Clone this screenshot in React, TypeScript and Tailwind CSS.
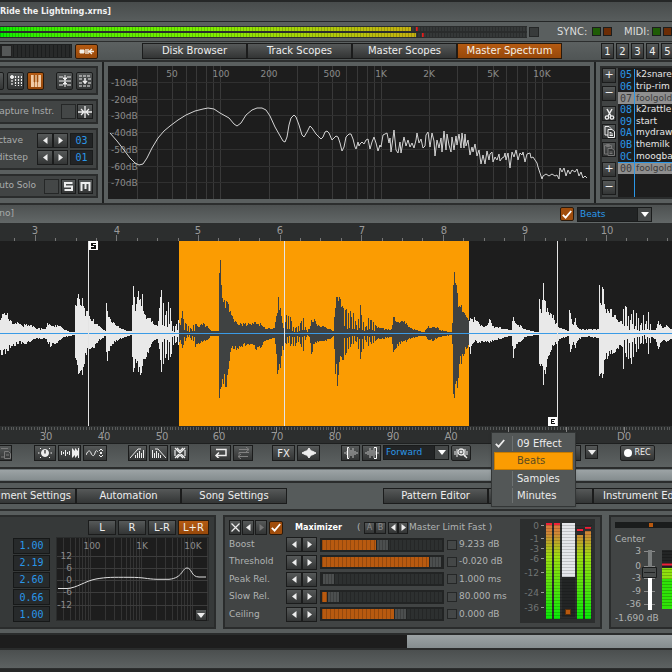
import type { ReactNode } from "react";

const BTN = "flex shrink-0 items-center justify-center border border-[#1b1c1c] bg-gradient-to-b from-[#565959] to-[#333535] text-[#eeeeee]";
const HOT = "flex shrink-0 items-center justify-center border border-[#2a1a0c] bg-gradient-to-b from-[#b45a12] to-[#97480a] text-[#f4f0e8]";
const BOX = "border-2 border-[#2a2c2c] bg-[#414444]";

// envelope of the sample: x, peak above and peak below the centre line
const WAVE: [number, number, number][] = [
  [0, 18, 22], [2, 19, 21], [7, 20, 17], [10, 13, 14], [14, 9, 12], [17, 11, 10], [21, 8, 10], [26, 9, 10], [31, 8, 7], [38, 5, 5], [45, 4, 5],
  [47, 10, 8], [50, 8, 13], [55, 8, 10], [60, 7, 6], [65, 3, 3], [73, 1, 1], [74, 1, 1], [75, 28, 24], [78, 39, 40], [80, 28, 37], [82, 35, 41],
  [84, 25, 30], [86, 22, 21], [89, 17, 15], [93, 14, 14], [97, 9, 9], [101, 5, 5], [105, 2, 2], [106, 30, 18], [107, 22, 27], [109, 16, 17],
  [113, 11, 10], [118, 7, 6], [125, 3, 3], [131, 2, 1], [132, 28, 23], [133, 47, 38], [135, 22, 25], [138, 42, 38], [140, 34, 41], [142, 39, 32],
  [144, 19, 25], [148, 15, 19], [152, 12, 8], [157, 7, 5], [159, 25, 15], [161, 43, 38], [163, 30, 30], [166, 22, 20], [169, 36, 30],
  [171, 12, 20], [174, 5, 8], [178, 13, 11], [180, 8, 6], [182, 22, 14], [184, 13, 10], [187, 8, 3], [190, 5, 4], [195, 9, 13], [200, 8, 9],
  [203, 10, 7], [207, 7, 6], [211, 2, 2], [218, 2, 2], [219, 60, 64], [220, 73, 55], [221, 48, 53], [222, 35, 45], [226, 32, 53], [228, 29, 35],
  [230, 22, 18], [233, 14, 15], [236, 11, 16], [240, 10, 13], [245, 10, 12], [250, 9, 10], [255, 11, 15], [260, 10, 14], [263, 6, 8], [268, 5, 6],
  [274, 5, 4], [276, 17, 20], [277, 20, 40], [278, 36, 36], [280, 25, 34], [282, 10, 12], [283, 5, 16], [286, 18, 10], [290, 16, 12],
  [292, 8, 11], [295, 5, 12], [300, 10, 10], [303, 15, 17], [306, 3, 3], [309, 4, 3], [311, 13, 20], [314, 14, 10], [318, 8, 8], [324, 6, 7],
  [330, 4, 5], [333, 2, 2], [334, 16, 15], [335, 25, 40], [336, 36, 30], [337, 36, 52], [339, 36, 28], [342, 27, 26], [346, 24, 19], [350, 22, 13],
  [353, 20, 10], [356, 8, 8], [360, 28, 25], [362, 13, 18], [365, 6, 6], [368, 15, 12], [371, 13, 10], [375, 8, 7], [380, 5, 5], [386, 4, 4],
  [391, 4, 3], [393, 16, 18], [398, 11, 12], [402, 12, 8], [406, 10, 8], [410, 5, 5], [416, 3, 3], [424, 1, 2], [428, 7, 6], [432, 6, 7],
  [437, 6, 4], [440, 3, 3], [445, 2, 2], [451, 1, 1], [452, 10, 10], [453, 48, 60], [454, 61, 64], [455, 50, 50], [457, 40, 54], [459, 27, 30],
  [461, 28, 30], [464, 20, 20], [467, 15, 14], [469, 12, 13], [470, 15, 20], [472, 14, 10], [474, 16, 8], [478, 11, 9], [483, 6, 8],
  [489, 14, 9], [493, 7, 7], [500, 6, 5], [505, 4, 3], [511, 3, 2], [512, 12, 12], [513, 16, 24], [516, 9, 10], [520, 8, 8], [525, 4, 3],
  [531, 2, 2], [538, 1, 1], [539, 34, 30], [541, 20, 30], [543, 50, 51], [545, 32, 40], [547, 25, 25], [550, 20, 18], [553, 18, 12],
  [556, 10, 10], [560, 5, 5], [564, 4, 4], [568, 2, 2], [569, 23, 10], [570, 20, 18], [573, 8, 8], [575, 15, 14], [578, 5, 6], [582, 4, 3],
  [590, 4, 3], [598, 4, 4], [599, 48, 42], [600, 30, 40], [602, 46, 44], [603, 44, 40], [605, 24, 25], [610, 24, 20], [615, 18, 18], [621, 12, 12],
  [622, 36, 50], [624, 26, 25], [627, 28, 20], [629, 10, 34], [632, 34, 30], [635, 7, 10], [636, 20, 18], [640, 8, 10], [643, 18, 10],
  [645, 9, 5], [648, 21, 20], [651, 3, 3], [655, 3, 5], [658, 12, 15], [662, 5, 7], [666, 8, 8], [672, 4, 6],
];

// stretches where the sample thins out into separate strokes
const SPARSE = [[162, 179], [183, 196], [284, 308], [343, 376], [622, 652]];

const SPECTRUM =
  "110,133 117,141 124,150 130,158 135,163 139,165 143,164 147,158 152,148 158,138 164,131 170,126 178,120 186,115 195,111 203,109 208,108 214,109 220,113 229,118 234,124 237,126 241,123 246,115 252,110 257,108 262,108 266,110 270,116 275,127 279,134 283,141 285,142 287,137 289,125 291,118 294,115 296,117 299,125 302,135 304,137 307,132 310,126 312,128 316,134 321,139 323,137 325,132 327,131 329,133 332,140 336,136 338,137 340,143 342,151 344,147 346,137 349,134 351,134 353,139 355,147 356,149 358,142 359,146 360,144 362,142 364,144 366,140 368,139 370,149 372,142 374,137 376,143 378,151 380,145 381,147 383,135 387,133 389,143 390,138 391,152 393,138 394,130 395,140 396,150 398,153 400,142 401,153 403,142 404,137 406,146 408,140 410,147 412,143 414,148 416,140 417,133 419,143 421,139 423,148 425,146 426,135 428,132 430,147 432,133 434,141 435,156 437,140 439,148 441,138 442,152 444,131 446,150 447,134 449,145 451,152 452,137 454,150 456,136 457,145 459,134 461,148 462,133 464,148 465,134 466,146 468,140 470,155 472,147 473,152 475,144 477,156 479,150 481,164 483,155 485,164 487,151 489,160 490,154 492,152 493,162 495,157 497,160 499,154 500,161 502,158 504,157 505,153 506,160 508,153 510,168 512,152 514,157 516,150 518,160 520,153 522,155 523,152 525,162 527,154 530,153 531,158 533,157 535,160 537,163 538,167 540,173 542,179 543,176 546,174 549,176 552,174 555,176 557,175 559,179 560,168 562,172 564,168 566,176 568,170 570,174 572,170 575,172 577,169 579,176 581,172 583,178 585,176 587,178";

// repeatable pseudo-random number between 0 and 1
function noise(n: number) {
  const v = Math.sin(n * 127.1) * 43758.5453;
  return v - Math.floor(v);
}

function wavePath(from: number, to: number) {
  let d = "";
  for (let x = from; x < to; x++) {
    const i = Math.max(1, WAVE.findIndex((p) => p[0] >= x));
    const [x0, u0, d0] = WAVE[i - 1];
    const [x1, u1, d1] = WAVE[i];
    const t = (x - x0) / (x1 - x0);
    const thin = SPARSE.some(([a, b]) => x >= a && x < b) && (x * 7) % 5 > 2 ? 0.25 : 1;
    // the listed peaks are drawn in full, the columns between them vary
    const ju = t === 1 ? 1 : 0.72 + 0.36 * noise(x);
    const jd = t === 1 ? 1 : 0.72 + 0.36 * noise(x + 900);
    const up = Math.max(1, Math.round((u0 + (u1 - u0) * t) * ju * thin));
    const down = Math.max(1, Math.round((d0 + (d1 - d0) * t) * jd * thin));
    d += `M${x} ${92 - up}h1V${93 + down}h-1z`;
  }
  return d;
}

const range = (n: number) => Array.from({ length: n }, (_, i) => i);

function Left() {
  return <svg width="5" height="7" viewBox="0 0 5 7" aria-hidden><path d="M4.5 0v7L0 3.5z" fill="currentColor" /></svg>;
}

function Right() {
  return <svg width="5" height="7" viewBox="0 0 5 7" aria-hidden><path d="M.5 0v7L5 3.5z" fill="currentColor" /></svg>;
}

function Down() {
  return <svg width="8" height="5" viewBox="0 0 8 5" aria-hidden><path d="M0 0h8L4 5z" fill="currentColor" /></svg>;
}

function Tick() {
  return <svg width="10" height="9" viewBox="0 0 10 9" aria-hidden><path d="M.8 4.8l2.8 2.8L9.2 1" fill="none" stroke="currentColor" strokeWidth="1.8" /></svg>;
}

function Icon({ children, w = 16, h = 12, label, className, hot }: { children: ReactNode; w?: number; h?: number; label: string; className: string; hot?: boolean }) {
  return (
    <button aria-label={label} className={`${hot ? HOT : BTN} ${className}`}>
      <svg width={w} height={h} viewBox={`0 0 ${w} ${h}`} fill="none" stroke="currentColor" strokeWidth="1">{children}</svg>
    </button>
  );
}

function CheckBox({ label }: { label: string }) {
  return (
    <label className="grid size-[14px] shrink-0 text-white">
      <input type="checkbox" defaultChecked aria-label={label} className="col-start-1 row-start-1 appearance-none rounded-[2px] border border-[#2a1a0c] bg-[#a04d0c]" />
      <span className="pointer-events-none col-start-1 row-start-1 grid place-items-center"><Tick /></span>
    </label>
  );
}

function EmptyBox({ label, className }: { label: string; className: string }) {
  return <input type="checkbox" aria-label={label} className={`shrink-0 appearance-none border border-[#252727] bg-[#444747] ${className}`} />;
}

function Drop({ value, className }: { value: string; className: string }) {
  return (
    <div className={`grid h-[15px] shrink-0 grid-cols-[1fr_14px] border border-[#1a1c1c] bg-[#222425] ${className}`}>
      <select aria-label={value} className="col-span-2 col-start-1 row-start-1 appearance-none bg-transparent pl-[2px] text-[9px] leading-[13px] text-[#2a97e8]">
        <option>{value}</option>
      </select>
      <span className="pointer-events-none col-start-2 row-start-1 grid place-items-center border-l border-[#1a1c1c] bg-[#464949] text-white"><Down /></span>
    </div>
  );
}

function Tab({ children, label, active, className = "" }: { children?: ReactNode; label?: string; active?: boolean; className?: string }) {
  return (
    <button aria-label={label} className={`${active ? HOT : BTN} h-[16px] overflow-hidden text-[10px] leading-[12px] whitespace-nowrap ${className}`}>
      {children}
    </button>
  );
}

function Leds() {
  return (
    <span className="flex shrink-0 gap-[2px]">
      <span className="size-[9px] border border-[#1c1e1e] bg-[#1f5c06]" />
      <span className="size-[9px] border border-[#1c1e1e] bg-[#6b2c06]" />
    </span>
  );
}

function MasterMeter({ level, peak }: { level: number; peak: number }) {
  return (
    <div className="relative h-[4px] bg-[#353838]">
      <div className="h-full bg-gradient-to-r from-[#00ee00] via-[#7df000] to-[#c4b010]" style={{ width: `${level}%` }} />
      <div className="absolute inset-y-0 w-[2px] bg-[#e02020]" style={{ left: `${peak}%` }} />
      <div className="absolute inset-0 bg-[repeating-linear-gradient(90deg,#00000030_0_1px,transparent_1px_3px)]" />
    </div>
  );
}

function TopBars() {
  return (
    <>
      <header className="flex h-[22px] items-center border-t-2 border-b border-[#252727] bg-gradient-to-b from-[#484c4c] to-[#585d5d]">
        <h1 className="flex w-[111px] justify-end overflow-hidden font-[DejaVu_Sans_Condensed,sans-serif] text-[9px] font-bold whitespace-nowrap text-[#f0f0f0]">Ride the Lightning.xrns]</h1>
      </header>
      <div className="flex h-[20px] items-center border-b border-[#2c2e2e] bg-[#5a5f5f] text-[10px] text-[#dcdcdc]">
        <div className="flex flex-1 flex-col gap-[2px] border-y border-[#2a2c2c] bg-[#2a2c2c]">
          <MasterMeter level={78} peak={79} />
          <MasterMeter level={79} peak={80} />
        </div>
        <span className="ml-[2px] size-[10px] shrink-0 border border-[#252727] bg-[#383b3b]" />
        <span className="ml-[18px] w-[35px] shrink-0">SYNC:</span>
        <Leds />
        <span className="ml-[12px] w-[28px] shrink-0">MIDI:</span>
        <Leds />
      </div>
      <nav className="flex h-[20px] items-center border-b-2 border-[#2c2e2e] bg-gradient-to-b from-[#5c6161] to-[#505555]">
        <div className="flex h-[14px] w-[72px] shrink-0 border border-[#1f2121] bg-[#282a2a] bg-[repeating-linear-gradient(90deg,#1c1e1e_0_1px,transparent_1px_4px)]">
          <span className="w-[11px] border border-[#222] bg-[#555858]" />
        </div>
        <Icon label="Follow" hot className="ml-[3px] h-[15px] w-[23px] rounded-[2px]" w={15} h={9}>
          <path d="M1 3h4v3H1z" fill="currentColor" />
          <path d="M7 2v5M9 2v5M15 4.500h-5M13 2l-3 2.500L13 7" strokeWidth="1.300" />
        </Icon>
        <div className="ml-[44px] grid flex-1 grid-cols-4">
          <Tab>Disk Browser</Tab>
          <Tab>Track Scopes</Tab>
          <Tab>Master Scopes</Tab>
          <Tab active>Master Spectrum</Tab>
        </div>
        <div className="ml-[39px] flex w-[71px] shrink-0 gap-[2px] overflow-hidden">
          {range(5).map((n) => (
            <button key={n} className={`${BTN} h-[16px] w-[13px] text-[10px]`}>{n + 1}</button>
          ))}
        </div>
      </nav>
    </>
  );
}

function EditPanel() {
  return (
    <aside className="flex w-[104px] shrink-0 flex-col gap-[4px] border-r-2 border-[#1e2020] pt-[4px] pr-[4px] text-[9px] text-[#a9acac]">
      <div className={`${BOX} flex h-[29px] items-center justify-end gap-[3px] overflow-hidden border-l-0 pr-[3px]`}>
        <Icon label="Record" className="h-[18px] w-[17px] rounded-[2px]" w={9} h={9}><circle cx="4" cy="4" r="3" fill="currentColor" /></Icon>
        <Icon label="Record notes" className="h-[18px] w-[17px] rounded-[2px]" w={12} h={12}>
          <circle cx="2" cy="2" r="1.500" fill="currentColor" />
          <path d="M2 5v6M5.500 1v10M8.500 1v10M11.500 1v10" strokeDasharray="2 1" strokeWidth="1.200" />
        </Icon>
        <Icon label="Keyboard" hot className="h-[18px] w-[17px] rounded-[2px]" w={12} h={12}>
          <path d="M1 0h10v12H1z" fill="#f0cba6" stroke="none" />
          <path d="M4 0h1v7H4zM7 0h1v7H7z" fill="#a04d0c" stroke="#a04d0c" strokeWidth=".6" />
          <path d="M4.500 7v5M7.500 7v5" stroke="#a04d0c" strokeWidth=".6" />
        </Icon>
        <span className="w-[6px] shrink-0" />
        <Icon label="Split" className="h-[18px] w-[17px] rounded-[2px]" w={12} h={12}><path d="M0 6h12M0 2h4M8 2h4M0 10h4M8 10h4M6 0v12" /><path d="M4 3h4L6 5zM4 9h4L6 7z" fill="currentColor" /></Icon>
        <Icon label="Quantize" className="h-[18px] w-[17px] rounded-[2px]" w={12} h={12}><path d="M0 1h12M0 11h12M0 4h3M9 4h3M0 8h3M9 8h3" strokeWidth="1.200" strokeDasharray="3 1" /><path d="M6 3v6M4 6l2 2 2-2" strokeWidth="1.500" /></Icon>
      </div>
      <div className={`${BOX} flex h-[25px] items-center justify-end gap-px border-l-0 pr-[3px] whitespace-nowrap`}>
        <span className="pr-[6px]">Capture Instr.</span>
        <EmptyBox label="Capture instrument" className="size-[15px]" />
        <Icon label="Capture" className="h-[15px] w-[16px]" w={14} h={12}><path d="M7 0v12M0 6h5M3 3l3 3-3 3M14 6H9M11 3L8 6l3 3" strokeWidth="1.300" /></Icon>
      </div>
      <div className={`${BOX} flex h-[42px] flex-col justify-center gap-[2px] border-l-0 pr-[3px]`}>
        {[["Octave", "03"], ["Editstep", "01"]].map(([name, value]) => (
          <div key={name} className="flex items-center justify-end">
            <label htmlFor={name} className={name === "Octave" ? "pr-[14px]" : "pr-[9px]"}>{name}</label>
            <button aria-label={`${name} down`} className={`${BTN} h-[15px] w-[16px]`}><Left /></button>
            <button aria-label={`${name} up`} className={`${BTN} h-[15px] w-[15px]`}><Right /></button>
            <input id={name} defaultValue={value} className="ml-[2px] h-[15px] w-[23px] shrink-0 border border-[#1a1c1c] bg-[#222425] text-center font-[DejaVu_Sans_Mono,monospace] text-[10px] text-[#2a97e8]" />
          </div>
        ))}
      </div>
      <div className={`${BOX} flex h-[24px] items-center justify-end gap-[2px] border-l-0 pr-[3px] whitespace-nowrap`}>
        <span className="pr-[6px]">Auto Solo</span>
        <EmptyBox label="Auto solo" className="size-[15px]" />
        <Icon label="Solo" className="size-[15px]" w={9} h={9}><path d="M8.500 1H1v3.500h7V8H.5" strokeWidth="2" /></Icon>
        <Icon label="Mute" className="size-[15px]" w={11} h={9}><path d="M1.500 9V1h8v8M5.500 1v6" strokeWidth="2" /></Icon>
      </div>
    </aside>
  );
}

function Spectrum() {
  const cols = [137, 157, 172, 186, 196, 206, 213, 220, 269, 297, 318, 332, 346, 357, 367, 374, 381, 429, 457, 477, 493, 506, 517, 527, 535, 542];
  const marks: [number, string][] = [[172, "50"], [221, "100"], [269, "200"], [332, "500"], [381, "1K"], [429, "2K"], [493, "5K"], [542, "10K"]];
  return (
    <main className="flex min-w-0 flex-1 border-r-2 border-[#1e2020] px-[4px] pt-[4px] pb-[4px]">
      <svg className="h-[133px] w-full bg-[#1d1d1d] text-[9px]" role="img" aria-label="Master spectrum">
        <g transform="translate(-108 -66)">
          {cols.map((x) => <path key={x} d={`M${x}.5 66v133`} stroke="#393939" />)}
          {range(7).map((i) => <path key={i} d={`M108 ${Math.round(82 + i * 16.7)}.5h1000`} stroke="#303030" />)}
          {marks.map(([x, t]) => <text key={t} x={x} y="77" textAnchor="middle" fill="#8b8b8b">{t}</text>)}
          {range(7).map((i) => <text key={i} x="111" y={Math.round(86 + i * 16.7)} fill="#8b8b8b">-{i + 1}0dB</text>)}
          <polyline points={SPECTRUM} fill="none" stroke="#d4d4d4" />
        </g>
      </svg>
    </main>
  );
}

function InstrumentList() {
  const items = [["05", "k2snare"], ["06", "trip-rim"], ["07", "foolgold"], ["08", "k2rattle"], ["09", "start"], ["0A", "mydraw"], ["0B", "themilk"], ["0C", "moogbass"]];
  const row = (id: string, name: string) => {
    const on = id === "07" || id === "00";
    return (
      <li key={id} className={`flex items-center overflow-hidden leading-[11px] ${on ? "bg-[#8f8f8f] text-[#3c3c3c]" : "text-[#e6e6e6]"}`}>
        <span className={`flex h-full w-[17px] shrink-0 items-center justify-center border-r border-[#2a97e8] font-[DejaVu_Sans_Mono,monospace] text-[10px] ${on ? "" : "text-[#2a97e8]"}`}>{id}</span>
        <span className="pl-px">{name}</span>
      </li>
    );
  };
  return (
    <aside className="flex w-[76px] shrink-0 overflow-hidden pt-[4px] pb-[4px] pl-[4px] text-[9px]">
      <div className="flex flex-1 overflow-hidden border-2 border-r-0 border-[#2a2c2c] bg-[#414444]">
        <div className="flex w-[14px] shrink-0 flex-col gap-[3px]">
          <button className={`${BTN} h-[15px] text-[11px]`}>+</button>
          <button className={`${BTN} h-[15px] text-[11px]`}>−</button>
          <Icon label="Cut" className="mt-[2px] h-[15px]" w={11} h={12}><path d="M3 1l4 7M8 1L4 8" strokeWidth="1.500" /><circle cx="3" cy="9.500" r="1.700" strokeWidth="1.300" /><circle cx="8" cy="9.500" r="1.700" strokeWidth="1.300" /></Icon>
          <Icon label="Copy" className="h-[15px]" w={11} h={12}><path d="M1 .5h4l2 2V9H1z" /><path d="M4 3.500h4l2.500 2V11.500H4z" fill="#333535" /><path d="M5.500 6.500h2M5.500 8h3.500M5.500 9.500h3.500" /></Icon>
          <Icon label="Paste" className="h-[15px] text-[#777]!" w={11} h={12}><path d="M.5 1.500h7V10h-7zM2.500.5h3v2h-3z" /><path d="M4 4.500h4l2.500 2v5H4z" fill="#333535" /><path d="M5.500 8h3M5.500 9.500h3" /></Icon>
          <button className={`${BTN} mt-[2px] h-[15px] text-[11px]`}>+</button>
          <button className={`${BTN} h-[15px] text-[11px]`}>−</button>
        </div>
        <div className="ml-[2px] flex flex-1 flex-col overflow-hidden bg-[#1d1d1d] pt-px whitespace-nowrap">
          <ul className="grid h-[93px] grid-rows-8">{items.map(([id, name]) => row(id, name))}</ul>
          <ul className="grid h-[12px] border-t border-[#2a97e8]">{row("00", "foolgold")}</ul>
          <span className="w-[17px] flex-1 border-r border-[#2a97e8]" />
        </div>
      </div>
    </aside>
  );
}

function SampleView() {
  return (
    <section className="bg-[#2c2e2e]">
      <svg className="block h-[16px] w-full text-[10px]" aria-hidden>
        {range(60).map((i) => <path key={i} d={`M${Math.round(-6 + i * 20.4)}.5 ${i % 4 === 2 ? 10 : 13}V16`} stroke="#777" />)}
        {range(14).map((i) => <text key={i} x={Math.round(35 + i * 81.7)} y="9" textAnchor="middle" fill="#9a9a9a">{i + 3}</text>)}
      </svg>
      <svg className="block h-[185px] w-full bg-[#1d1d1d]" role="img" aria-label="Sample waveform" shapeRendering="crispEdges">
        <rect x="179" width="290" height="185" fill="#fb9c02" />
        <path d={wavePath(0, 179)} fill="#e9e9e9" />
        <path d={wavePath(179, 469)} fill="#3f4242" />
        <path d={wavePath(469, 672)} fill="#e9e9e9" />
        <rect y="92" width="100%" height="1" fill="#3a9be6" />
        <path d="M88.500 0v185M557.500 0v185M284.500 0v185" stroke="#e4e4e4" />
        <path d="M89 0h9v9h-9zM548 176h9v9h-9z" fill="#fff" />
        <path d="M96 2.500h-4v2h3v2.500h-4M554.500 178.500h-3v4h3M551 180.500h3" stroke="#111" fill="none" strokeWidth="1.500" />
      </svg>
      <svg className="block h-[17px] w-full text-[10px]" aria-hidden>
        {range(400).map((i) => <path key={i} d={`M${Math.round(i * 2.89 - 1)}.5 1v3`} stroke="#585a5a" />)}
        {range(16).map((i) => <path key={i} d={`M${Math.round(45 + i * 57.85)}.5 1v6`} stroke="#858585" />)}
        {["30", "40", "50", "60", "70", "80", "90", "A0"].map((t, i) => (
          <text key={t} x={Math.round(46 + i * 57.8)} y="14" textAnchor="middle" fill="#9a9a9a">{t}</text>
        ))}
        <text x="624" y="14" textAnchor="middle" fill="#9a9a9a">D0</text>
      </svg>
    </section>
  );
}

function Menu() {
  return (
    <div role="menu" className="absolute top-[-12px] left-[491px] grid h-[75px] w-[85px] grid-rows-4 border border-[#333636] bg-[#535757] p-[2px] text-[10px] text-[#ececec] shadow">
      {["09 Effect", "Beats", "Samples", "Minutes"].map((t) => (
        <button key={t} role="menuitem" className={t === "Beats" ? "flex items-center border border-[#c97c00] bg-[#fb9c02] text-[#5a4a20]" : "flex items-center border border-transparent"}>
          <span className={`flex h-full w-[18px] items-center ${t === "Beats" ? "" : "border-r border-[#6d7171]"}`}>{t === "09 Effect" && <Tick />}</span>
          <span className="pl-[4px]">{t}</span>
        </button>
      ))}
    </div>
  );
}

const BURST = "M1 5v2M3 4v4M5 1v10M7 3v6M9 1v10M11 4v4M13 5v2";

function Toolbar() {
  const b = "h-[16px]";
  return (
    <div className="relative flex h-[24px] items-start gap-[2px] border-t border-[#1e2020] bg-gradient-to-b from-[#4b4f4f] to-[#5d6262] pt-px">
      <Icon label="Paste" className={`${b} w-[12px] border-l-0 text-[#7a7a7a]!`} w={10} h={12}><path d="M0 1.500h7M0 10h3M3.500 4.500h4l2 2v5h-6zM5 8h3" /></Icon>
      <Icon label="Adjust volume" className={`${b} ml-[20px] w-[22px]`} w={14} h={12}><circle cx="7" cy="6" r="3.500" fill="currentColor" /><path d="M7 3v3.500" stroke="#333" strokeWidth="1.300" /><path d="M0 6h1.500M12.500 6H14M2 1l1 1M12 1l-1 1M2 11l1-1M12 11l-1-1" /></Icon>
      <Icon label="Normalize" className={`${b} w-[23px]`} w={18} h={12}><path d="M.5 4v4M2.500 5v2M4.500 3v6M6.500 5v2M8.500 4v4" /><path d="M11 1l3 3v-3l3 3V1h1v10h-1V8l-3 3V8l-3 3z" fill="currentColor" stroke="none" /></Icon>
      <Icon label="Smooth" className={`${b} w-[24px]`} w={18} h={10}><path d="M0 7c2-5 4-5 5-2s3 4 4 0 2-2 3-1M13 3l2-2 2 2M13 7l2 2 2-2M15 4l1 1-1 1-1-1z" /></Icon>
      <Icon label="Fade in" className={`${b} ml-[19px] w-[19px]`} w={15} h={12}><path d="M0 11L8 2h3M5.500 8v3M7.500 6v5M9.500 4v7M11.500 6v5M13.500 3v8" /></Icon>
      <Icon label="Fade out" className={`${b} w-[19px]`} w={15} h={12}><path d="M15 11L7 2H4M9.500 8v3M7.500 6v5M5.500 4v7M3.500 6v5M1.500 3v8" /></Icon>
      <Icon label="Crossfade" className={`${b} w-[19px]`} w={14} h={12}><path d="M2 1l10 10M12 1L2 11M4 1l3 3 3-3M4 11l3-3 3 3M2 3v6M12 3v6" strokeWidth="1.200" /></Icon>
      <Icon label="Reverse" className={`${b} ml-[19px] w-[21px]`} w={14} h={10}><path d="M2 1.500h10v6H2M5 4.500l-3 3 3 3" strokeWidth="1.500" /></Icon>
      <Icon label="Swap channels" className={`${b} w-[20px] text-[#818181]!`} w={14} h={12}><path d="M3 2.500h10M10 0l3 2.500L10 5M13 5.500H3v2M2 9.500h10M5 7L2 9.500 5 12" /></Icon>
      <button className={`${BTN} ${b} ml-[17px] w-[23px] text-[10px]`}>FX</button>
      <Icon label="Apply" className={`${b} w-[23px]`} w={16} h={12}><path d="M1 6l4-2h1l2-3 2 3h1l4 2-4 2h-1l-2 3-2-3H5z" fill="currentColor" /></Icon>
      <Icon label="Loop start" className={`${b} ml-[19px] w-[19px] text-[#b9b9b9]!`} w={14} h={12}><path d={BURST} /><path d="M5 .5H3.500v11H5" stroke="#fff" /></Icon>
      <Icon label="Loop end" className={`${b} w-[19px] text-[#b9b9b9]!`} w={14} h={12}><path d={BURST} /><path d="M9 .5h2.500v11H9" stroke="#fff" /></Icon>
      <Drop value="Forward" className="w-[66px]" />
      <Icon label="Zoom" className={`${b} w-[20px] rounded-[2px]`} w={14} h={12}><path d="M1 4v4M3 2v8M11 2v8M13 4v4" /><circle cx="7" cy="5" r="3" strokeWidth="1.300" /><path d="M7 3.500v3M5.500 5h3M9 7l4 4" strokeWidth="1.300" /></Icon>
      <button aria-label="Ruler format" className={`${BTN} ${b} ml-[20px] flex-1`} />
      <button aria-label="Ruler menu" className={`${BTN} ml-[2px] h-[14px] w-[13px]`}><Down /></button>
      <button className={`${BTN} ${b} mr-[17px] ml-[20px] w-[35px] gap-[2px] rounded-[2px] text-[8px]`}>
        <span className="size-[8px] rounded-full bg-white" />REC
      </button>
      <Menu />
    </div>
  );
}

function Equalizer() {
  const y = (v: number) => v - 538;
  return (
    <section className={`${BOX} flex w-[216px] shrink-0 flex-col items-end border-l-0 bg-[#363939]! pt-[3px] pr-[5px] text-[10px]`}>
      <div className="flex gap-[2px]">
        {["L", "R", "L-R", "L+R"].map((t) => (
          <button key={t} className={`${t === "L+R" ? HOT : BTN} h-[15px] w-[28px] last:w-[31px]`}>{t}</button>
        ))}
      </div>
      <div className="mt-[2px] flex gap-[6px]">
        <div className="grid h-[86px] grid-rows-5 items-center">
          {["1.00", "2.19", "2.60", "0.66", "1.00"].map((v, i) => (
            <input key={i} aria-label={`Band ${i + 1}`} defaultValue={v} className="h-[16px] w-[37px] border border-[#161818] bg-[#272a2b] text-center font-[DejaVu_Sans_Mono,monospace] text-[10px] text-[#2a97e8]" />
          ))}
        </div>
        <div className="grid">
          <svg className="col-start-1 row-start-1 h-[84px] w-[153px] border border-[#2a2c2c] bg-[#1d1d1d] text-[9px]" role="img" aria-label="Equalizer curve">
            <g transform="translate(-56 0)">
              {range(4).map((dec) => range(9).map((k) => (
                <path key={`${dec}-${k}`} d={`M${Math.round(38 + dec * 51 + Math.log10(k + 1) * 51)}.5 0v84`} stroke="#343434" />
              )))}
              {[[556, "12"], [568, "6"], [580, "0"], [592, "-6"], [605, "-12"]].map(([v, t]) => (
                <g key={t}>
                  <path d={`M56 ${y(Number(v))}.5h153`} stroke="#3c3c3c" />
                  <text x="71" y={y(Number(v)) + 3} textAnchor="end" fill="#8b8b8b">{t}</text>
                </g>
              ))}
              <text x="91" y="11" textAnchor="middle" fill="#8b8b8b">100</text>
              <text x="141" y="11" textAnchor="middle" fill="#8b8b8b">1K</text>
              <text x="192" y="11" textAnchor="middle" fill="#8b8b8b">10K</text>
              <path d="M57 50.500H66C76 50 84 43 95 41S112 39.300 128 39.300S145 41 156 41.300H168C182 40 181 30 186 30S190 39 198 39H205" fill="none" stroke="#dedede" />
            </g>
          </svg>
          <button aria-label="Band menu" className={`${BTN} col-start-1 row-start-1 mr-[2px] mb-[2px] size-[12px] self-end justify-self-end`}><Down /></button>
        </div>
      </div>
    </section>
  );
}

function Param({ name, value, text }: { name: string; value: number; text: string }) {
  return (
    <div className="flex items-center">
      <label htmlFor={name} className="w-[57px] shrink-0">{name}</label>
      <button aria-label={`${name} down`} className={`${BTN} h-[15px] w-[16px]`}><Left /></button>
      <button aria-label={`${name} up`} className={`${BTN} h-[15px] w-[15px]`}><Right /></button>
      <input
        id={name}
        type="range"
        defaultValue={value}
        className="mx-[3px] h-[14px] w-[124px] shrink-0 appearance-none border-2 border-[#222424] bg-[#2d3030] bg-[repeating-linear-gradient(90deg,#00000030_0_1px,transparent_1px_4px),linear-gradient(#b85a10,#b85a10)] bg-no-repeat [&::-webkit-slider-thumb]:h-[12px] [&::-webkit-slider-thumb]:w-[13px] [&::-webkit-slider-thumb]:appearance-none [&::-webkit-slider-thumb]:border [&::-webkit-slider-thumb]:border-[#222424] [&::-webkit-slider-thumb]:bg-[#4c4f4f] [&::-webkit-slider-thumb]:bg-[repeating-linear-gradient(90deg,#00000000_0_2px,#00000030_2px_3px)]"
        style={{ backgroundSize: `100% 100%, ${value}% 100%` }}
      />
      <EmptyBox label={`${name} automation`} className="size-[10px]" />
      <span className="pl-[2px] whitespace-nowrap">{text}</span>
    </div>
  );
}

function LevelMeters() {
  const bars = [[546, 523], [554, 523], [577, 535], [585, 531]];
  return (
    <svg className="h-[104px] w-[75px] shrink-0 bg-[#2c2e2e] text-[9px]" role="img" aria-label="Gain reduction">
      <defs>
        <linearGradient id="lvl" gradientUnits="userSpaceOnUse" x1="0" y1="523" x2="0" y2="619">
          <stop offset="0" stopColor="#e07040" />
          <stop offset=".12" stopColor="#cd8a34" />
          <stop offset=".35" stopColor="#9ee010" />
          <stop offset="1" stopColor="#08e808" />
        </linearGradient>
      </defs>
      <g transform="translate(-520 -519)">
        {[[526, "0"], [539, "-1"], [549, "-3"], [559, "-6"], [573, "-12"], [593, "-24"], [608, "-36"]].map(([v, t]) => (
          <g key={t}>
            <text x="539" y={Number(v) + 3} textAnchor="end" fill="#707474">{t}</text>
            <path d={`M541 ${Number(v) - 1}.5h3`} stroke="#999" />
          </g>
        ))}
        {bars.map(([x, top]) => <rect key={x} x={x} y={top} width="6" height={619 - top} fill="url(#lvl)" />)}
        <path d="M546 524h6M554 524h6M577 530h6M585 528h6" stroke="#f02038" strokeWidth="2" />
        <rect x="562" y="523" width="13" height="94" fill="#232525" />
        <rect x="562" y="523" width="13" height="54" fill="#e4e6ea" />
        {range(32).map((i) => <path key={i} d={`M546 ${525 + i * 3}.5h46`} stroke="#000" strokeOpacity=".16" />)}
        <path d="M565.500 609.500h5v5h-5z" fill="#b8580e" stroke="#5c3008" />
      </g>
    </svg>
  );
}

function Maximizer() {
  return (
    <section className={`${BOX} flex min-w-0 flex-1 justify-between pt-[2px] pr-[5px] pl-[4px] text-[9px] text-[#b0b3b3]`}>
      <div className="shrink-0">
        <div className="flex items-center pt-px whitespace-nowrap">
          <Icon label="Remove" className="h-[15px] w-[12px]" w={9} h={9}><path d="M.5.5l8 8M8.500.5l-8 8" strokeWidth="1.200" /></Icon>
          <button aria-label="Previous" className={`${BTN} ml-px h-[15px] w-[12px]`}><Left /></button>
          <button aria-label="Next" className={`${BTN} ml-px h-[15px] w-[12px] text-[#777]!`}><Right /></button>
          <span className="ml-[2px] flex"><CheckBox label="Maximizer on" /></span>
          <h2 className="ml-[12px] w-[62px] font-[DejaVu_Sans_Condensed,sans-serif] font-bold text-white">Maximizer</h2>
          <span className="w-[7px]">(</span>
          <button className={`${BTN} h-[12px] w-[11px] text-[8px] text-[#8b8b8b]!`}>A</button>
          <button className={`${BTN} h-[12px] w-[11px] text-[8px] text-[#8b8b8b]!`}>B</button>
          <button aria-label="Previous preset" className={`${BTN} ml-[2px] h-[12px] w-[10px]`}><Left /></button>
          <button aria-label="Next preset" className={`${BTN} h-[12px] w-[10px]`}><Right /></button>
          <span className="pl-px">Master Limit Fast )</span>
        </div>
        <div className="mt-px grid h-[87px] grid-rows-5">
          <Param name="Boost" value={50} text="9.233 dB" />
          <Param name="Threshold" value={100} text="-0.020 dB" />
          <Param name="Peak Rel." value={0} text="1.000 ms" />
          <Param name="Slow Rel." value={5} text="80.000 ms" />
          <Param name="Ceiling" value={67} text="0.000 dB" />
        </div>
      </div>
      <LevelMeters />
    </section>
  );
}

function Volume() {
  return (
    <section className={`${BOX} w-[63px] shrink-0 overflow-hidden border-r-0 pt-[5px] pl-[4px] text-[9px] text-[#b0b3b3]`}>
      <div className="flex h-[6px] justify-end bg-[#1a1c1c] pr-[18px]"><span className="m-px w-[4px] bg-[#b8580e]" /></div>
      <p className="mt-[5px] leading-[12px]">Center</p>
      <svg className="h-[67px] w-[57px]" role="img" aria-label="Volume fader">
        <g transform="translate(-615 -545)">
          {[[551, "3"], [566, "0"], [578, "-3"], [591, "-9"], [604, "-36"]].map(([v, t]) => (
            <g key={t}>
              <text x="641" y={Number(v) + 3} textAnchor="end" fill="#b0b3b3">{t}</text>
              <path d={`M644 ${v}.5h11`} stroke="#8b8b8b" />
            </g>
          ))}
          <path d="M648 550h4v20h-4z" fill="#7b7e7e" />
          <path d="M648 572h4v38h-4z" fill="#fff" />
          <path d="M642.500 567.500h14v10h-14z" fill="#4a4d4d" stroke="#1a1c1c" />
          <path d="M644 572.500h11" stroke="#202222" />
          <path d="M662 550h30v18h-30z" fill="#232525" />
          <path d="M662 568h30v11h-30z" fill="#8fe010" />
          <path d="M662 579h30v30h-30z" fill="#30e408" />
          {range(19).map((i) => <path key={i} d={`M662 ${551 + i * 3}.5h30`} stroke="#000" strokeOpacity=".2" />)}
          <path d="M662 564.500h30" stroke="#f02038" strokeWidth="2" />
        </g>
      </svg>
      <p className="leading-[12px] whitespace-nowrap">-1.690 dB</p>
    </section>
  );
}

export default function App() {
  return (
    <div className="flex min-h-screen w-full flex-col overflow-hidden bg-[#262828] font-[DejaVu_Sans,sans-serif]">
      <TopBars />
      <div className="flex h-[141px] overflow-hidden bg-[#5a5f5f]">
        <EditPanel />
        <Spectrum />
        <InstrumentList />
      </div>
      <div className="flex h-[22px] items-center border-y-2 border-[#2c2e2e] bg-gradient-to-b from-[#4d5151] to-[#626767] text-[9px] text-[#a9acac]">
        <span className="flex w-[14px] justify-end overflow-hidden whitespace-nowrap">mono]</span>
        <span className="flex-1" />
        <CheckBox label="Show ruler" />
        <Drop value="Beats" className="mr-[20px] ml-[3px] w-[75px]" />
      </div>
      <SampleView />
      <Toolbar />
      <div className="h-[16px] border-y-2 border-[#2a2c2c] bg-[#2a2c2c]"><div className="h-[12px] border-y border-[#6f7678] bg-gradient-to-b from-[#9ca3a5] to-[#858d8f]" /></div>
      <nav className="flex h-[28px] items-center border-b-2 border-[#2c2e2e] bg-[#565b5b]">
        <Tab className="w-[76px] justify-end! border-l-0 pr-[4px]">Instrument Settings</Tab>
        <Tab className="w-[105px]">Automation</Tab>
        <Tab className="w-[106px]">Song Settings</Tab>
        <span className="flex-1" />
        <Tab className="w-[105px]">Pattern Editor</Tab>
        <Tab label="Sample Editor" className="w-[105px]" />
        <Tab className="w-[79px] justify-start! border-r-0 pl-[9px]">Instrument Editor</Tab>
      </nav>
      <div className="flex h-[122px] gap-[7px] overflow-hidden bg-[#585d5d] pt-[4px] pb-[4px]">
        <Equalizer />
        <Maximizer />
        <Volume />
      </div>
      <div className="flex h-[17px] border-y-2 border-[#2a2c2c] bg-[#1d1d1d]">
        <div className="flex-[407]" />
        <div className="flex-[265] bg-gradient-to-b from-[#9ca3a5] to-[#858d8f]" />
      </div>
      <footer className="h-[19px] border-b border-[#2c2e2e] bg-gradient-to-b from-[#4b4f4f] to-[#5d6262]" />
    </div>
  );
}
